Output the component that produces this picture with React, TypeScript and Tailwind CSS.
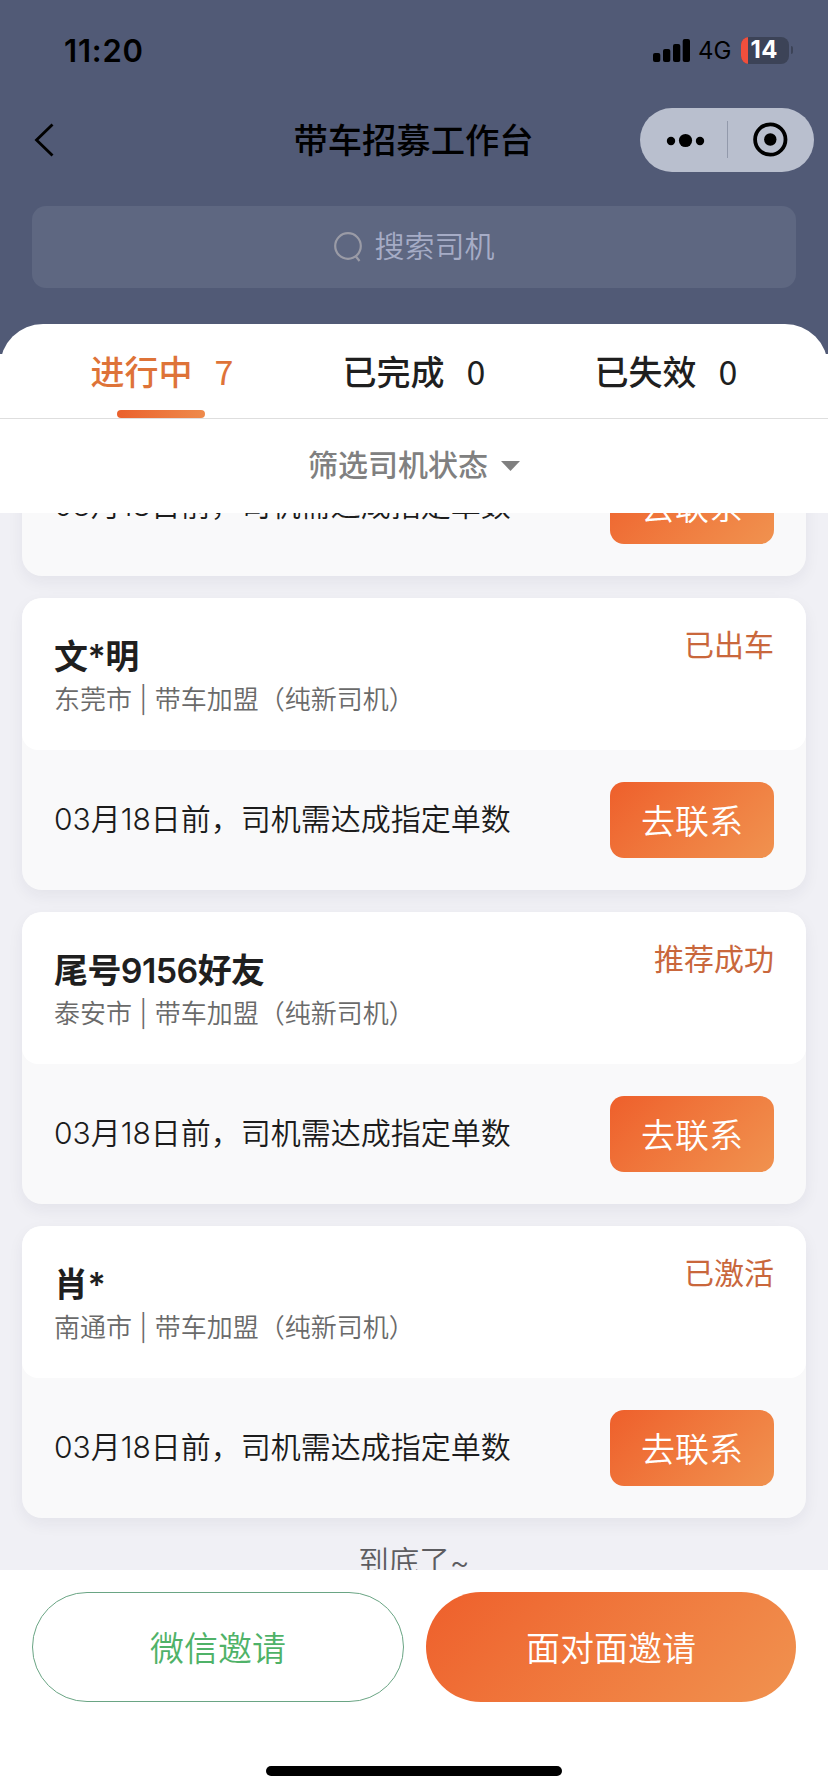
type Driver = {
  name: string;
  city: string;
  status: string;
};

const drivers: Driver[] = [
  { name: "文*明", city: "东莞市", status: "已出车" },
  { name: "尾号9156好友", city: "泰安市", status: "推荐成功" },
  { name: "肖*", city: "南通市", status: "已激活" },
];

const tabs = [
  { label: "进行中", count: 7, active: true },
  { label: "已完成", count: 0, active: false },
  { label: "已失效", count: 0, active: false },
];

function StatusBar() {
  return (
    <div className="flex h-[100px] items-center justify-between pl-16 pr-[35px]">
      <span className="text-[31px] leading-none font-semibold tracking-[0.8px]">11:20</span>
      <div className="flex items-center">
        <svg width="37" height="23" viewBox="0 0 37 23" fill="currentColor">
          <rect x="0" y="14" width="7.3" height="9" rx="2" />
          <rect x="10" y="10" width="7.3" height="13" rx="2" />
          <rect x="20" y="5" width="7.3" height="18" rx="2" />
          <rect x="29.7" y="0" width="7.3" height="23" rx="2" />
        </svg>
        <span className="ml-2 w-[34px] pt-px text-[24px] leading-none">4G</span>
        <div className="ml-[9px] flex h-[27px] w-12 items-center overflow-hidden rounded-[8px] bg-[#3c4357]">
          <span className="h-full w-[7px] bg-[#f04f3c]" />
          <span className="ml-[2.5px] text-[24px] leading-none font-bold tracking-[0.5px] text-white">14</span>
        </div>
        <span className="ml-[2px] h-[8px] w-[2px] rounded-r-full bg-[#3c4357]" />
      </div>
    </div>
  );
}

function NavBar() {
  return (
    <div className="grid h-20 grid-cols-[174px_1fr_174px] items-center px-[14px]">
      <svg className="ml-5" width="20" height="34" viewBox="0 0 20 34" fill="none" stroke="currentColor" strokeWidth="2.8">
        <path d="M18.5 1.5 2.5 17l16 15.5" />
      </svg>
      <h1 className="pt-[3px] pr-px text-center text-[34.3px] leading-none font-medium">带车招募工作台</h1>
      <div className="flex h-16 items-center rounded-full bg-[#b9bfce]">
        <svg width="174" height="64" viewBox="0 0 174 64">
          <circle cx="31" cy="33" r="4.2" />
          <circle cx="45.5" cy="32.5" r="6.6" />
          <circle cx="60" cy="33" r="4.2" />
          <path d="M87.5 13v37" stroke="#9299ab" />
          <circle cx="130.3" cy="31.5" r="15.2" fill="none" stroke="currentColor" strokeWidth="3.8" />
          <circle cx="130.3" cy="31.5" r="6.2" />
        </svg>
      </div>
    </div>
  );
}

function SearchBox() {
  return (
    <div className="mx-8 mt-[26px] flex h-[82px] items-center justify-center rounded-[14px] bg-[#5e6781]">
      <svg width="28" height="32" viewBox="0 0 28 32" fill="none" stroke="#9a9ba6" strokeWidth="2.2">
        <circle cx="14" cy="15" r="12.8" />
        <path d="m21.5 25 4 5" />
      </svg>
      <span className="ml-[13px] pb-[2px] text-[30px] leading-none font-[350] text-[#a6acc6]">搜索司机</span>
    </div>
  );
}

function ContactRow() {
  return (
    <div className="flex h-[140px] items-center justify-between px-8">
      <p className="pb-[3px] text-[30px] leading-none font-[350] text-[#1c1c1c]">03月18日前，司机需达成指定单数</p>
      <button className="h-[76px] w-[164px] rounded-[14px] bg-linear-135 from-[#ee5f2b] to-[#f0924f] pt-[3px] text-[34px] leading-none font-[350] text-white">
        去联系
      </button>
    </div>
  );
}

function DriverCard({ driver }: { driver: Driver }) {
  return (
    <article className="h-[292px] shrink-0 overflow-hidden rounded-[20px] bg-[#f9f9fa] shadow-[0_6px_16px_rgba(40,40,70,0.06)]">
      <div className="flex h-[152px] justify-between rounded-b-[16px] bg-white px-8">
        <div className="pt-10">
          <h2 className="text-[34px] leading-[38px] font-semibold tracking-[-0.6px] text-[#1f1f1f]">{driver.name}</h2>
          <p className="mt-[5px] text-[26px] leading-[38px] font-[350] text-[#6a6a6a]">
            {driver.city} | 带车加盟（纯新司机）
          </p>
        </div>
        <span className="pt-[27px] text-[30px] leading-[40px] text-[#c9673c]">{driver.status}</span>
      </div>
      <ContactRow />
    </article>
  );
}

export default function App() {
  return (
    <div className="flex h-[1792px] w-[828px] flex-col overflow-hidden bg-white font-['Inter','Noto_Sans_CJK_SC',sans-serif] text-black">
      <header className="h-[354px] shrink-0 bg-[#515a76]">
        <StatusBar />
        <NavBar />
        <SearchBox />
      </header>

      <nav className="relative -mt-[30px] grid h-[95px] shrink-0 grid-cols-3 rounded-t-[43px] border-b border-[#dedede] bg-white px-9 font-['Noto_Sans_CJK_SC',sans-serif]">
        {tabs.map((tab) => (
          <div
            key={tab.label}
            className={`relative flex items-center justify-center gap-[22px] pb-px text-[34px] leading-none font-medium ${
              tab.active ? "text-[#de7338]" : "text-[#1f1f1f]"
            }`}
          >
            <span>{tab.label}</span>
            <span className="font-normal">{tab.count}</span>
            {tab.active && (
              <span className="absolute bottom-0 left-[81px] h-2 w-[88px] rounded-full bg-linear-to-r from-[#ea602c] to-[#ee8a4b]" />
            )}
          </div>
        ))}
      </nav>

      <div className="flex h-[94px] shrink-0 items-center justify-center gap-[13px] text-[#808080]">
        <span className="pb-[3px] text-[30px] leading-none font-medium">筛选司机状态</span>
        <svg width="19" height="10" viewBox="0 0 19 10" fill="currentColor">
          <path d="M0 0h19L9.5 10z" />
        </svg>
      </div>

      {/* list is scrolled to the end, so the first card sticks out above it */}
      <main className="flex h-[1057px] shrink-0 flex-col justify-end overflow-hidden bg-[#f0f0f5] px-[22px]">
        <div className="-mb-[10px] flex flex-col gap-[22px]">
          <div className="h-[140px] shrink-0 rounded-b-[20px] bg-[#f9f9fa] shadow-[0_6px_16px_rgba(40,40,70,0.06)]">
            <ContactRow />
          </div>
          {drivers.map((driver) => (
            <DriverCard key={driver.name} driver={driver} />
          ))}
          <p className="h-10 text-center text-[30.5px] leading-[43px] font-[350] text-[#5c5c60]">到底了~</p>
        </div>
      </main>

      <footer className="flex grow flex-col items-center justify-between px-8 pt-[22px] pb-4">
        <div className="flex w-full gap-[22px]">
          <button className="h-[110px] w-[372px] rounded-full border border-[#6aa584] pt-[3px] text-[34px] leading-none font-[350] text-[#4fb268]">
            微信邀请
          </button>
          <button className="h-[110px] grow rounded-full bg-linear-135 from-[#ee5f2b] to-[#f0924f] pt-[3px] text-[34px] leading-none font-[350] text-white">
            面对面邀请
          </button>
        </div>
        <div className="h-[10px] w-[296px] rounded-full bg-black" />
      </footer>
    </div>
  );
}
